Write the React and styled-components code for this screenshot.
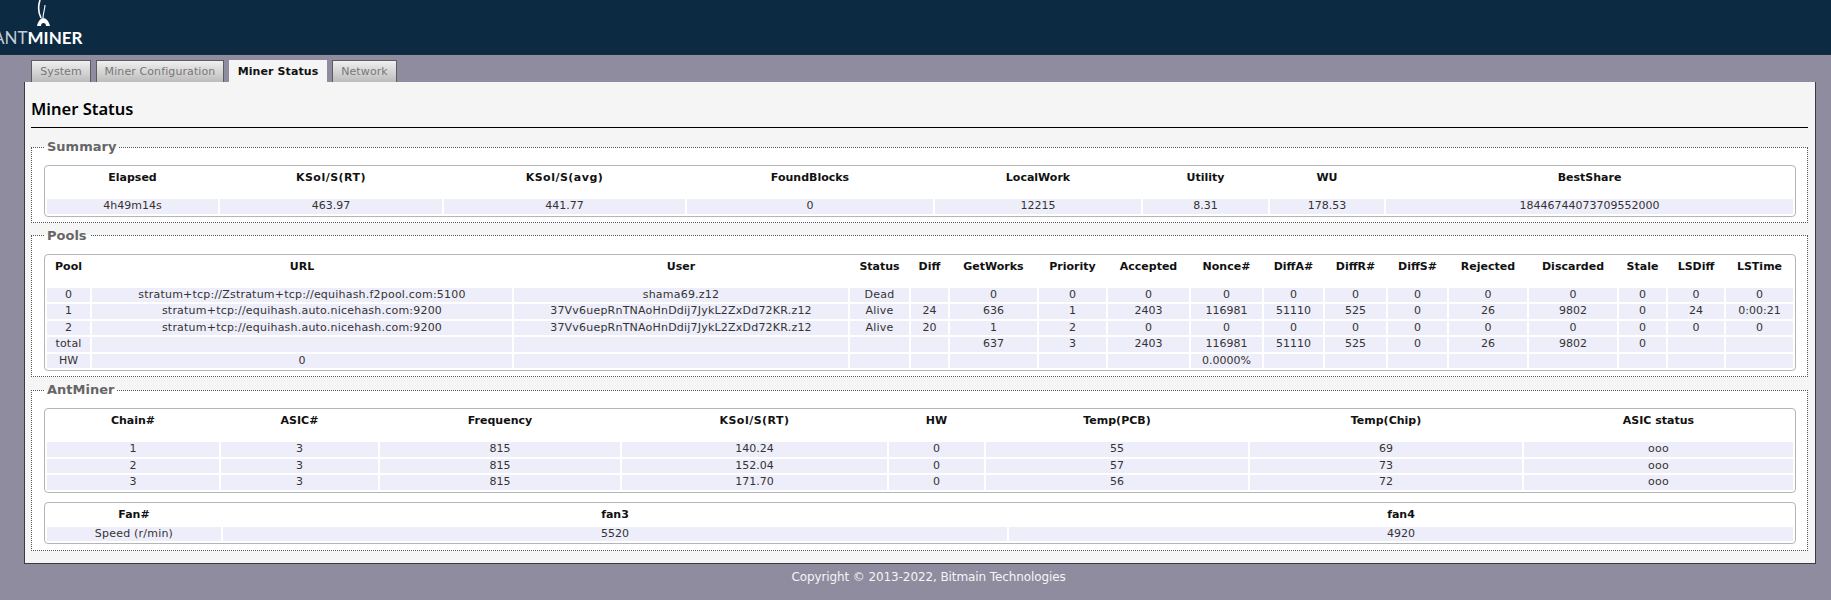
import styled, { createGlobalStyle } from "styled-components";

const GlobalStyle = createGlobalStyle`
  html, body {
    margin: 0;
    padding: 0;
    background: #8f8ca0;
    font-family: "DejaVu Sans", Verdana, sans-serif;
    font-size: 11px;
  }
`;

const Header = styled.header`
  display: flex;
  height: 54px;
  overflow: hidden;
  background: #0d2a43;
  border-bottom: 1px solid #1b2a3c;
`;
const Logo = styled.div`
  display: flex;
  flex-direction: column;
  margin-left: -7px;
`;
const AntIcon = styled.svg`
  display: block;
  margin-left: 42px;
  width: 16px;
  height: 27px;
  fill: #fff;
  stroke: #fff;
`;
const Wordmark = styled.div`
  margin-top: 2px;
  font-family: Lato, sans-serif;
  font-size: 17px;
  line-height: 18px;
  font-weight: 700;
  color: #fff;
  white-space: nowrap;
`;
const WordmarkLight = styled.span`
  font-weight: 400;
  color: #c5ced6;
`;

const Tabs = styled.nav`
  display: flex;
  gap: 5px;
  height: 22px;
  margin: 5px 0 0 31px;
`;
const Tab = styled.a`
  box-sizing: border-box;
  display: flex;
  align-items: center;
  justify-content: center;
  width: ${(p) => p.$w}px;
  font-size: 11px;
  letter-spacing: 0.1px;
  cursor: pointer;
  color: ${(p) => (p.$active ? "#111" : "#777")};
  font-weight: ${(p) => (p.$active ? 700 : 400)};
  background: ${(p) =>
    p.$active ? "#f5f5f5" : "linear-gradient(#efefef, #bcbcbc)"};
  border: ${(p) => (p.$active ? "none" : "1px solid #5c5c5c")};
  border-bottom: none;
`;

const Panel = styled.main`
  box-sizing: border-box;
  width: 1792px;
  height: 482px;
  margin-left: 24px;
  padding: 0 7px 0 6px;
  background: #f5f5f5;
  border: 1px solid #3a3a44;
  border-top: none;
`;
const Title = styled.h2`
  margin: 0 0 11px;
  padding: 16px 0 7px;
  font-family: "Noto Sans", sans-serif;
  font-size: 16.5px;
  line-height: 22px;
  font-weight: 600;
  color: #000;
  border-bottom: 1px solid #000;
`;
const Section = styled.fieldset`
  margin: 0 0 5px;
  padding: 10px 11px ${(p) => p.$bottom || 5}px 12px;
  min-width: 0;
  background: #fff;
  border: 1px dotted #555;
`;
const Legend = styled.legend`
  margin-left: 0;
  padding: 0 3px;
  font-size: 13px;
  line-height: 16px;
  font-weight: 700;
  color: #666;
`;
const TableBox = styled.div`
  margin-top: ${(p) => p.$top || 0}px;
  border: 1px solid #b5b5b5;
  border-radius: 4px;
  background: #fff;
`;
const Table = styled.table`
  width: 100%;
  table-layout: fixed;
  border-collapse: separate;
  border-spacing: 2px;
`;
const Col = styled.col`
  width: ${(p) => p.$w}px;
`;
const Th = styled.th`
  height: ${(p) => p.$h || 29}px;
  padding: 3px 0 0;
  box-sizing: border-box;
  vertical-align: top;
  font-size: 11px;
  line-height: 14px;
  font-weight: 700;
  letter-spacing: ${(p) => (p.$wide ? "0.5px" : "0")};
  color: #111;
  text-align: center;
`;
const Td = styled.td`
  height: 14.5px;
  padding: 0;
  font-size: 11px;
  line-height: 14px;
  letter-spacing: ${(p) => (p.$wide ? "0.21px" : "0")};
  color: #333;
  text-align: center;
  white-space: nowrap;
  background: #eeeefa;
`;
const Footer = styled.footer`
  margin: 6px 0 0 26px;
  font-size: 12px;
  line-height: 14px;
  letter-spacing: -0.1px;
  color: #f5f5f5;
  text-align: center;
`;

const tabs = [
  { name: "System", w: 60 },
  { name: "Miner Configuration", w: 128 },
  { name: "Miner Status", w: 98 },
  { name: "Network", w: 65 },
];

const summary = {
  cols: [171, 222, 241, 246, 206, 125, 114, 407],
  head: ["Elapsed", "KSol/S(RT)", "KSol/S(avg)", "FoundBlocks", "LocalWork", "Utility", "WU", "BestShare"],
  rows: [["4h49m14s", "463.97", "441.77", "0", "12215", "8.31", "178.53", "18446744073709552000"]],
};

const pools = {
  cols: [43, 420, 334, 59, 37, 87, 67, 81, 71, 59, 61, 59, 78, 88, 47, 56, 67],
  head: ["Pool", "URL", "User", "Status", "Diff", "GetWorks", "Priority", "Accepted", "Nonce#", "DiffA#", "DiffR#", "DiffS#", "Rejected", "Discarded", "Stale", "LSDiff", "LSTime"],
  rows: [
    ["0", "stratum+tcp://Zstratum+tcp://equihash.f2pool.com:5100", "shama69.z12", "Dead", "", "0", "0", "0", "0", "0", "0", "0", "0", "0", "0", "0", "0"],
    ["1", "stratum+tcp://equihash.auto.nicehash.com:9200", "37Vv6uepRnTNAoHnDdij7JykL2ZxDd72KR.z12", "Alive", "24", "636", "1", "2403", "116981", "51110", "525", "0", "26", "9802", "0", "24", "0:00:21"],
    ["2", "stratum+tcp://equihash.auto.nicehash.com:9200", "37Vv6uepRnTNAoHnDdij7JykL2ZxDd72KR.z12", "Alive", "20", "1", "2", "0", "0", "0", "0", "0", "0", "0", "0", "0", "0"],
    ["total", "", "", "", "", "637", "3", "2403", "116981", "51110", "525", "0", "26", "9802", "0", "", ""],
    ["HW", "0", "", "", "", "", "", "", "0.0000%", "", "", "", "", "", "", "", ""],
  ],
};

const chains = {
  cols: [172, 157, 240, 265, 95, 262, 272, 269],
  head: ["Chain#", "ASIC#", "Frequency", "KSol/S(RT)", "HW", "Temp(PCB)", "Temp(Chip)", "ASIC status"],
  rows: [
    ["1", "3", "815", "140.24", "0", "55", "69", "ooo"],
    ["2", "3", "815", "152.04", "0", "57", "73", "ooo"],
    ["3", "3", "815", "171.70", "0", "56", "72", "ooo"],
  ],
};

const fans = {
  cols: [174, 784, 784],
  head: ["Fan#", "fan3", "fan4"],
  rows: [["Speed (r/min)", "5520", "4920"]],
};

function DataTable({ data, top, headHeight }) {
  return (
    <TableBox $top={top}>
      <Table>
        <colgroup>
          {data.cols.map((w, i) => (
            <Col key={i} $w={w} />
          ))}
        </colgroup>
        <thead>
          <tr>
            {data.head.map((h) => (
              <Th key={h} $h={headHeight} $wide={h.includes("/")}>{h}</Th>
            ))}
          </tr>
        </thead>
        <tbody>
          {data.rows.map((row, r) => (
            <tr key={r}>
              {row.map((cell, c) => (
                <Td key={c} $wide={/[a-z]{3}/i.test(cell)}>{cell}</Td>
              ))}
            </tr>
          ))}
        </tbody>
      </Table>
    </TableBox>
  );
}

function App() {
  return (
    <>
      <GlobalStyle />
      <Header>
        <Logo>
          <AntIcon viewBox="0 0 16 27">
            <path d="M5 0C3 6 3 12 6 18" fill="none" strokeWidth="1.6" />
            <path d="M10 5C10 9 8 13 8 18" fill="none" strokeWidth="1.1" />
            <path d="M2 26C3 21 6 18 8 18C11 18 14 21 15 26L11 26C11 24 10 23 8.500 23C7 23 6 24 6 26Z" strokeWidth="0" />
          </AntIcon>
          <Wordmark>
            <WordmarkLight>ANT</WordmarkLight>MINER
          </Wordmark>
        </Logo>
      </Header>
      <Tabs>
        {tabs.map((t) => (
          <Tab key={t.name} $w={t.w} $active={t.name === "Miner Status"}>{t.name}</Tab>
        ))}
      </Tabs>
      <Panel>
        <Title>Miner Status</Title>
        <Section>
          <Legend>Summary</Legend>
          <DataTable data={summary} />
        </Section>
        <Section>
          <Legend>Pools</Legend>
          <DataTable data={pools} />
        </Section>
        <Section $bottom={6}>
          <Legend>AntMiner</Legend>
          <DataTable data={chains} />
          <DataTable data={fans} top={9} headHeight={20} />
        </Section>
      </Panel>
      <Footer>Copyright © 2013-2022, Bitmain Technologies</Footer>
    </>
  );
}

export default App;
